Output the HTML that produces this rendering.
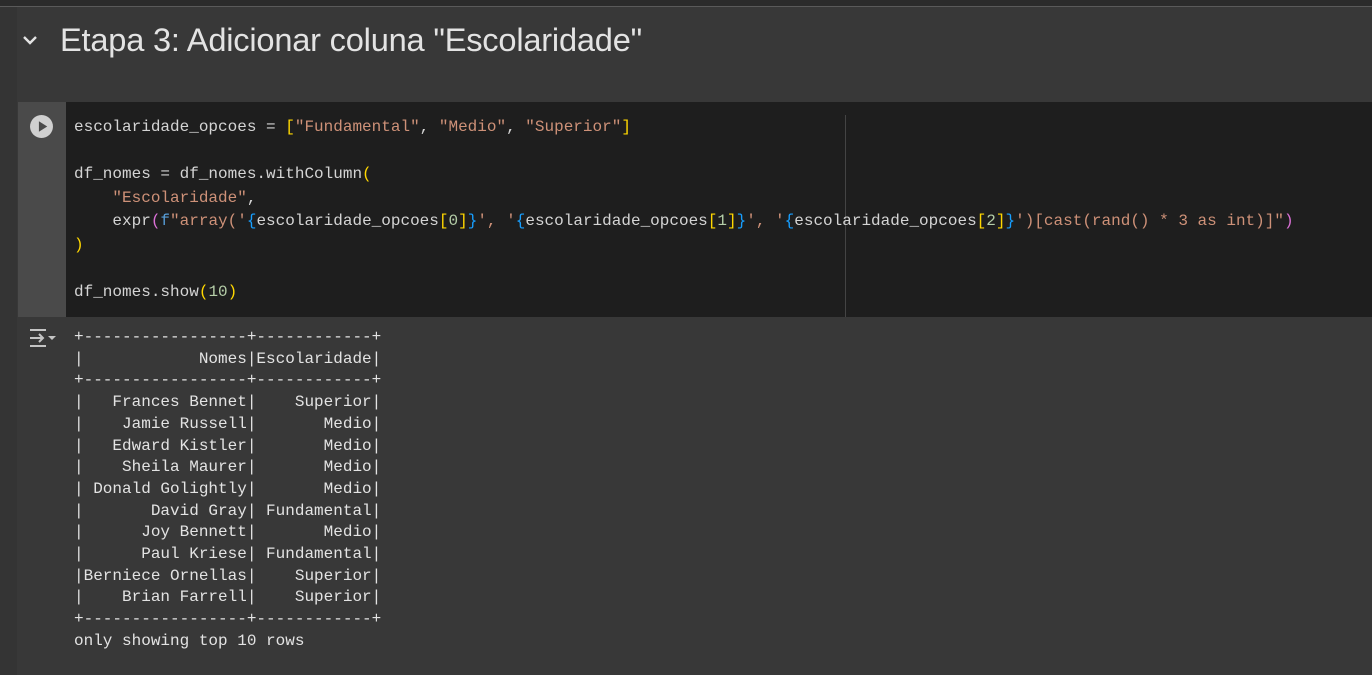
<!DOCTYPE html>
<html><head><style>
body{margin:0;width:1372px;height:675px;background:#383838;overflow:hidden;position:relative;font-family:"Liberation Sans",sans-serif}
.top{position:absolute;left:0;top:0;width:1372px;height:6px;background:#2b2b2b;border-bottom:1px solid #5a5a5a}
.lstrip{position:absolute;left:0;top:7px;width:17px;height:668px;background:#343434}
h1{position:absolute;left:60px;top:21px;margin:0;font-weight:normal;font-size:32.6px;color:#e3e3e3;letter-spacing:-0.2px}
.chev{position:absolute;left:20px;top:30px}
.cell{position:absolute;left:18px;top:102px;width:1354px;height:215px;background:#1e1e1e}
.gut{position:absolute;left:18px;top:102px;width:48px;height:215px;background:#4a4a4a}
.ruler{position:absolute;left:845px;top:115px;width:1px;height:202px;background:#444}
pre{margin:0;font-family:"Liberation Mono",monospace;font-size:16px;position:absolute;left:74px;color:#d4d4d4}
.code{top:116px;line-height:23.5px}
.out{top:327px;line-height:21.7px;color:#e3e3e3}
.s{color:#ce9178}.y{color:#ffd700}.b{color:#179fff}.p{color:#da70d6}.n{color:#b5cea8}.k{color:#569cd6}
</style></head><body>
<div class="top"></div><div class="lstrip"></div>
<svg class="chev" width="20" height="20" viewBox="0 0 20 20"><path d="M4 7l6 6 6-6" stroke="#e3e3e3" stroke-width="2.4" fill="none"/></svg>
<h1>Etapa 3: Adicionar coluna "Escolaridade"</h1>
<div class="cell"></div><div class="gut"></div><div class="ruler"></div>
<svg style="position:absolute;left:29px;top:114px" width="25" height="25" viewBox="0 0 24 24"><circle cx="12" cy="12" r="11" fill="#d0d0d0"/><path d="M9.5 7v10l8-5z" fill="#4a4a4a"/></svg>
<pre class="code">escolaridade_opcoes = <span class="y">[</span><span class="s">"Fundamental"</span>, <span class="s">"Medio"</span>, <span class="s">"Superior"</span><span class="y">]</span>

df_nomes = df_nomes.withColumn<span class="y">(</span>
    <span class="s">"Escolaridade"</span>,
    expr<span class="p">(</span><span class="k">f</span><span class="s">"array('</span><span class="b">{</span>escolaridade_opcoes<span class="y">[</span><span class="n">0</span><span class="y">]</span><span class="b">}</span><span class="s">', '</span><span class="b">{</span>escolaridade_opcoes<span class="y">[</span><span class="n">1</span><span class="y">]</span><span class="b">}</span><span class="s">', '</span><span class="b">{</span>escolaridade_opcoes<span class="y">[</span><span class="n">2</span><span class="y">]</span><span class="b">}</span><span class="s">')[cast(rand() * 3 as int)]"</span><span class="p">)</span>
<span class="y">)</span>

df_nomes.show<span class="y">(</span><span class="n">10</span><span class="y">)</span></pre>
<svg style="position:absolute;left:28px;top:326px" width="30" height="24" viewBox="0 0 30 24"><path d="M2 4h16M2 20h16M2 12h13M11 8l4 4-4 4" stroke="#c4c4c4" stroke-width="2" fill="none"/><path d="M20 10h8l-4 4z" fill="#c4c4c4"/></svg>
<pre class="out">+-----------------+------------+
|            Nomes|Escolaridade|
+-----------------+------------+
|   Frances Bennet|    Superior|
|    Jamie Russell|       Medio|
|   Edward Kistler|       Medio|
|    Sheila Maurer|       Medio|
| Donald Golightly|       Medio|
|       David Gray| Fundamental|
|      Joy Bennett|       Medio|
|      Paul Kriese| Fundamental|
|Berniece Ornellas|    Superior|
|    Brian Farrell|    Superior|
+-----------------+------------+
only showing top 10 rows</pre>
</body></html>
